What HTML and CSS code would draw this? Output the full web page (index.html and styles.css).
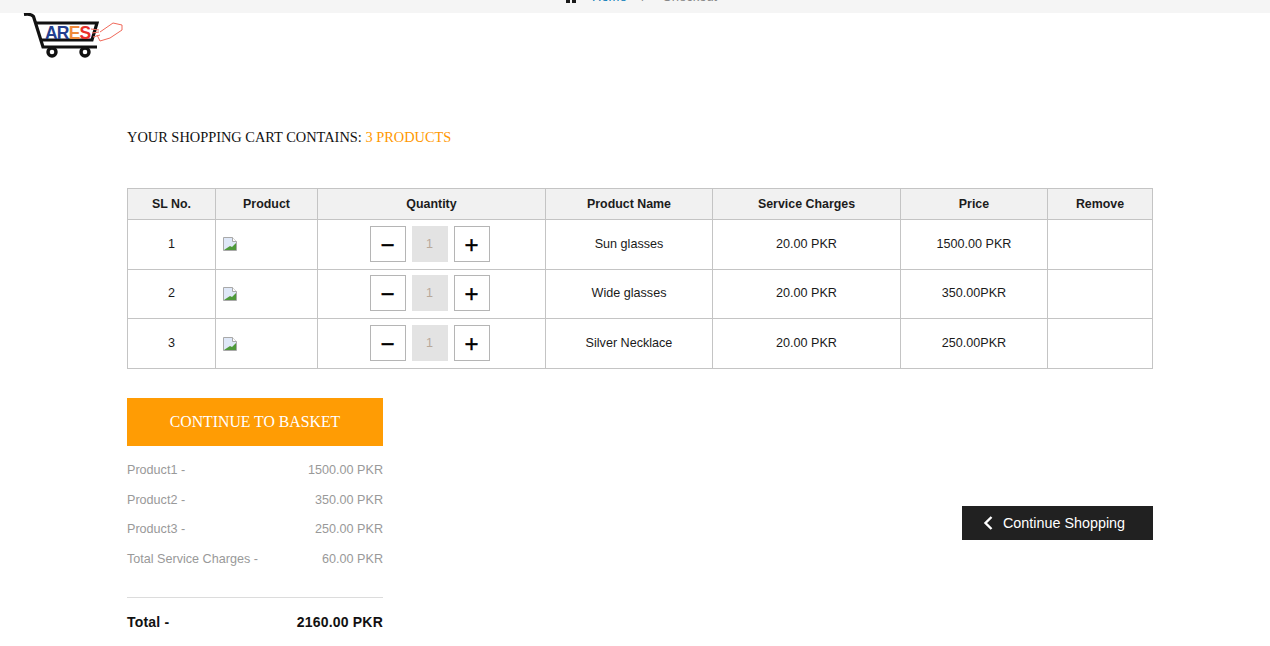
FILE: index.html

```html
<!DOCTYPE html>
<html lang="en">
<head>
    <meta charset="UTF-8">
    <meta name="viewport" content="width=device-width, initial-scale=1.0">
    <title>Checkout</title>
    <link rel="stylesheet" href="styles.css">
</head>
<body>
    <div class="top-bar">
        <div class="crumbs">
            <svg class="home-icon" width="12" height="12" viewBox="0 0 12 12"><path d="M1 0h4v12H1zM7 0h4v12H7z" fill="#1a1a1a"/></svg>
            <a class="crumb-link">Home</a>
            <span class="crumb-sep">/</span>
            <span class="crumb-now">Checkout</span>
        </div>
    </div>

    <header class="logo-row">
        <svg class="logo" width="102" height="45" viewBox="0 0 102 45">
            <path d="M1 1.500c4-.5 8 0 9.500 2L20 34h54" fill="none" stroke="#111" stroke-width="3.200"/>
            <path d="M13 10h61l-5 17H18" fill="none" stroke="#111" stroke-width="3.200"/>
            <circle cx="29" cy="39" r="4" fill="none" stroke="#111" stroke-width="3.400"/>
            <circle cx="62" cy="39" r="4" fill="none" stroke="#111" stroke-width="3.400"/>
            <text x="22" y="26" class="logo-text"><tspan class="logo-ar">AR</tspan><tspan class="logo-e">E</tspan><tspan class="logo-s">S</tspan></text>
            <path d="M74 22l3 6 10-3 12-8v-5l-9-2-13 9M68 16l8 1M69 20l7-1M70 24l7-2" fill="none" stroke="#f0695a" stroke-width="1"/>
        </svg>
    </header>

    <main class="cart">
        <h2 class="cart-title">YOUR SHOPPING CART CONTAINS: <span class="count">3 PRODUCTS</span></h2>

        <table class="cart-table">
            <thead>
                <tr>
                    <th class="col-sl">SL No.</th>
                    <th class="col-product">Product</th>
                    <th class="col-qty">Quantity</th>
                    <th class="col-name">Product Name</th>
                    <th class="col-service">Service Charges</th>
                    <th class="col-price">Price</th>
                    <th>Remove</th>
                </tr>
            </thead>
            <tbody>
                <tr>
                    <td>1</td>
                    <td class="thumb"><svg class="broken" width="14" height="14" viewBox="1 0 14 14"><path d="M1.500.5h9l4 4v9h-13z" fill="#dfe8f8" stroke="#a9a9a9"/><path d="M2 13l6-4 2 1 4-4v7z" fill="#4e9a3a"/><path d="M10.500.5v4h4" fill="#fff" stroke="#a9a9a9"/></svg></td>
                    <td><div class="qty"><button class="qty-btn">&minus;</button><span class="qty-val">1</span><button class="qty-btn">+</button></div></td>
                    <td>Sun glasses</td>
                    <td>20.00 PKR</td>
                    <td>1500.00 PKR</td>
                    <td></td>
                </tr>
                <tr>
                    <td>2</td>
                    <td class="thumb"><svg class="broken" width="14" height="14" viewBox="1 0 14 14"><path d="M1.500.5h9l4 4v9h-13z" fill="#dfe8f8" stroke="#a9a9a9"/><path d="M2 13l6-4 2 1 4-4v7z" fill="#4e9a3a"/><path d="M10.500.5v4h4" fill="#fff" stroke="#a9a9a9"/></svg></td>
                    <td><div class="qty"><button class="qty-btn">&minus;</button><span class="qty-val">1</span><button class="qty-btn">+</button></div></td>
                    <td>Wide glasses</td>
                    <td>20.00 PKR</td>
                    <td>350.00PKR</td>
                    <td></td>
                </tr>
                <tr>
                    <td>3</td>
                    <td class="thumb"><svg class="broken" width="14" height="14" viewBox="1 0 14 14"><path d="M1.500.5h9l4 4v9h-13z" fill="#dfe8f8" stroke="#a9a9a9"/><path d="M2 13l6-4 2 1 4-4v7z" fill="#4e9a3a"/><path d="M10.500.5v4h4" fill="#fff" stroke="#a9a9a9"/></svg></td>
                    <td><div class="qty"><button class="qty-btn">&minus;</button><span class="qty-val">1</span><button class="qty-btn">+</button></div></td>
                    <td>Silver Necklace</td>
                    <td>20.00 PKR</td>
                    <td>250.00PKR</td>
                    <td></td>
                </tr>
            </tbody>
        </table>

        <div class="checkout-row">
            <section class="summary">
                <a class="basket-btn">CONTINUE TO BASKET</a>
                <ul class="lines">
                    <li><span>Product1 -</span><span>1500.00 PKR</span></li>
                    <li><span>Product2 -</span><span>350.00 PKR</span></li>
                    <li><span>Product3 -</span><span>250.00 PKR</span></li>
                    <li><span>Total Service Charges -</span><span>60.00 PKR</span></li>
                </ul>
                <div class="total"><span>Total -</span><span>2160.00 PKR</span></div>
            </section>
            <a class="shop-btn">
                <svg width="10" height="14" viewBox="0 0 10 14"><path d="M8.500 1L2.500 7l6 6" fill="none" stroke="#fff" stroke-width="2.400"/></svg>
                Continue Shopping
            </a>
        </div>
    </main>
</body>
</html>
```

FILE: styles.css

```css
* {
    box-sizing: border-box;
    padding: 0;
    margin: 0;
}
body {
    font-family: "Liberation Sans", Arial, sans-serif;
    background: #fff;
    color: #111;
    overflow: hidden;
}

/* top strip, crumbs are cut off by the edge of the window */
.top-bar {
    height: 13px;
    background: #f5f5f5;
    overflow: hidden;
    display: flex;
    padding-left: 565px;
}
.crumbs {
    height: 13px;
    margin-top: -10px;
    display: flex;
    align-items: center;
    font-size: 13px;
    line-height: 13px;
}
.crumb-link {
    margin-left: 15px;
    color: #0a7cb8;
}
.crumb-sep {
    margin-left: 15px;
    color: #888;
}
.crumb-now {
    margin-left: 17px;
    color: #888;
}
.home-icon {
    margin-top: 1px;
}

.logo-row {
    height: 92px;
    padding-left: 23px;
}
.logo {
    display: block;
}
.logo-text {
    font-family: "Liberation Sans", sans-serif;
    font-size: 17.5px;
    font-weight: 700;
    letter-spacing: -0.8px;
}
.logo-ar {
    fill: #24408f;
}
.logo-e {
    fill: #f08a3c;
}
.logo-s {
    fill: #e8302a;
}

.cart {
    width: 1026px;
    margin-left: 127px;
}
.cart-title {
    font-family: "Liberation Serif", "Times New Roman", serif;
    font-size: 14.4px;
    font-weight: 400;
    line-height: 16px;
    margin-top: 24px;
    margin-bottom: 43px;
}
.count {
    color: #ff9800;
}

.cart-table {
    width: 1026px;
    border-collapse: collapse;
    table-layout: fixed;
    font-size: 12.6px;
    text-align: center;
}
.cart-table th,
.cart-table td {
    border: 1px solid #c4c4c4;
}
.cart-table th {
    height: 31px;
    background: #f1f1f1;
    font-size: 12.4px;
    font-weight: 700;
    color: #1c1c1c;
}
.cart-table td {
    height: 49.67px;
    padding-bottom: 1px;
    color: #1a1a1a;
}
.col-sl { width: 88px; }
.col-product { width: 102px; }
.col-qty { width: 228px; }
.col-name { width: 167px; }
.col-service { width: 188px; }
.col-price { width: 147px; }

.cart-table .thumb {
    text-align: left;
    padding-left: 7px;
}
.broken {
    display: block;
    margin-top: 1px;
}

.qty {
    display: flex;
    justify-content: center;
    gap: 6px;
    padding-right: 4px;
}
.qty-btn {
    width: 36px;
    height: 36px;
    padding-top: 2px;
    background: #fff;
    border: 1px solid #b5b5b5;
    font-family: "Liberation Sans", sans-serif;
    font-size: 24px;
    line-height: 30px;
    -webkit-text-stroke: 0.4px #000;
    color: #000;
}
.qty-val {
    width: 36px;
    height: 36px;
    background: #e3e3e3;
    color: #b8a99a;
    line-height: 36px;
}

.checkout-row {
    display: flex;
    justify-content: space-between;
    align-items: flex-start;
    margin-top: 29px;
}
.summary {
    width: 256px;
}
.basket-btn {
    display: block;
    height: 48px;
    background: #ff9c04;
    color: #fff;
    font-family: "Liberation Serif", "Times New Roman", serif;
    font-size: 15.8px;
    line-height: 47px;
    text-align: center;
}
.lines {
    list-style: none;
    margin-top: 10px;
    padding-bottom: 22px;
    border-bottom: 1px solid #dcdcdc;
}
.lines li {
    display: flex;
    justify-content: space-between;
    height: 29.67px;
    line-height: 29px;
    font-size: 12.6px;
    color: #999;
}
.total {
    display: flex;
    justify-content: space-between;
    margin-top: 16px;
    font-size: 14px;
    line-height: 16px;
    font-weight: 700;
    letter-spacing: 0.2px;
}

.shop-btn {
    display: flex;
    align-items: center;
    gap: 10px;
    width: 191px;
    height: 34px;
    margin-top: 108px;
    padding-left: 21px;
    background: #212121;
    color: #fff;
    font-size: 14.35px;
}
```
